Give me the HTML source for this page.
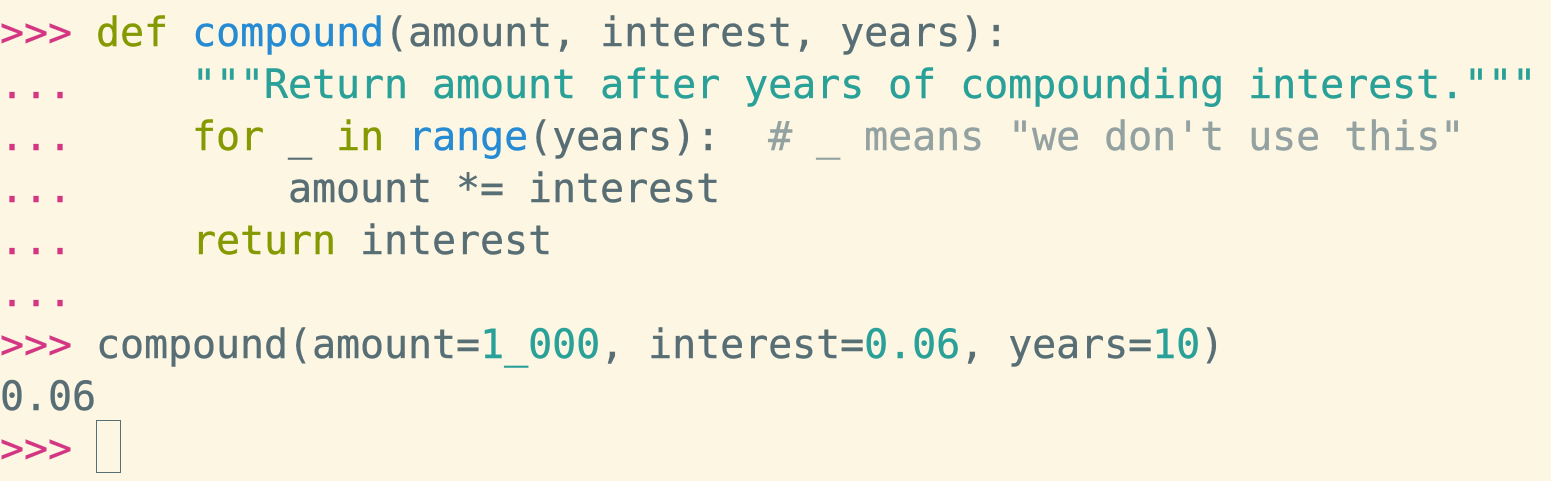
<!DOCTYPE html>
<html><head><meta charset="utf-8"><style>
html,body{margin:0;padding:0;background:#fdf6e3;width:1551px;height:481px;overflow:hidden}
pre{margin:0;padding:7px 0 0 0;font-family:"DejaVu Sans Mono","Liberation Mono",monospace;font-size:40px;line-height:52px;color:#586e75;letter-spacing:-0.08px;-webkit-text-stroke:0.4px currentColor}
.p{color:#d33682}.k{color:#859900}.f{color:#268bd2}.s{color:#2aa198}.c{color:#93a1a1}
.cur{display:inline-block;width:25px;height:53px;border:1px solid #586e75;vertical-align:top;box-sizing:border-box;position:relative;top:-3px}
</style></head><body><pre><span class="p">&gt;&gt;&gt;</span> <span class="k">def</span> <span class="f">compound</span>(amount, interest, years):
<span class="p">...</span>     <span class="s">"""Return amount after years of compounding interest."""</span>
<span class="p">...</span>     <span class="k">for</span> _ <span class="k">in</span> <span class="f">range</span>(years):  <span class="c"># _ means "we don't use this"</span>
<span class="p">...</span>         amount *= interest
<span class="p">...</span>     <span class="k">return</span> interest
<span class="p">...</span>
<span class="p">&gt;&gt;&gt;</span> compound(amount=<span class="s">1_000</span>, interest=<span class="s">0.06</span>, years=<span class="s">10</span>)
0.06
<span class="p">&gt;&gt;&gt;</span> <span class="cur"></span></pre></body></html>
